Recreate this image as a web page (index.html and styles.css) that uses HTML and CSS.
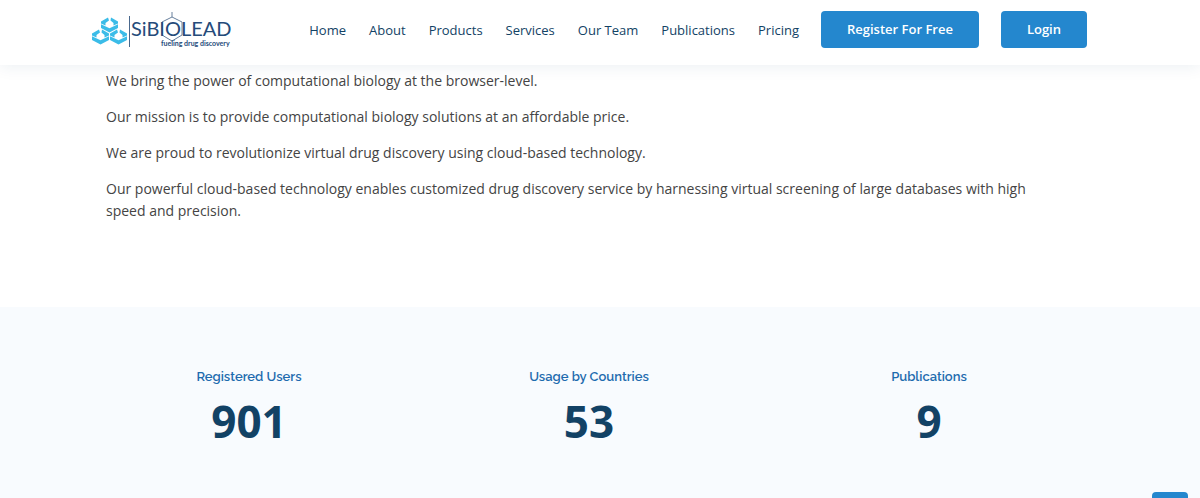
FILE: index.html
```html
<!DOCTYPE html>
<html lang="en">
<head>
  <meta charset="UTF-8">
  <meta name="viewport" content="width=device-width, initial-scale=1.0">
  <title>SiBIOLEAD</title>
  <link rel="stylesheet" href="styles.css">
</head>
<body>
  <header id="header">
    <div class="container header-inner">
      <a href="#" class="logo" aria-label="SiBIOLEAD">
        <svg width="142" height="39" viewBox="0 0 142 39">
          <defs>
            <g id="cube" fill="#3bbce8">
              <path d="M0 4.5 L7 0.5 L8 3.5 L4.5 6 V8.5 L0 6.5 Z" />
              <path d="M10 0.5 L17 4.5 V6.5 L12.5 8.5 V6 L9.5 3.5 Z" />
              <path d="M0 7.2 L8.5 11.2 L17 7.2 V11 L8.5 15.5 L0 11 Z" />
            </g>
          </defs>
          <use href="#cube" x="10" y="7" />
          <use href="#cube" x="1" y="19" />
          <use href="#cube" x="19" y="19" />
          <path d="M38.5 6 V37" stroke="#49688d" stroke-width="1" />
          <path d="M81 2 V7 L91 12 V25 L81 31 L71 25 V12 L81 7" fill="none" stroke="#68809d" stroke-width="1" />
          <text x="40" y="26" class="logo-name">SiBIOLEAD</text>
          <text x="70" y="36" class="logo-tagline">fueling drug discovery</text>
        </svg>
      </a>
      <nav class="navbar">
        <ul>
          <li><a href="#">Home</a></li>
          <li><a href="#">About</a></li>
          <li><a href="#">Products</a></li>
          <li><a href="#">Services</a></li>
          <li><a href="#">Our Team</a></li>
          <li><a href="#">Publications</a></li>
          <li><a href="#">Pricing</a></li>
        </ul>
        <a href="#" class="btn">Register For Free</a>
        <a href="#" class="btn">Login</a>
      </nav>
    </div>
  </header>

  <main>
    <section class="about">
      <div class="container about-text">
        <p>We bring the power of computational biology at the browser-level.</p>
        <p>Our mission is to provide computational biology solutions at an affordable price.</p>
        <p>We are proud to revolutionize virtual drug discovery using cloud-based technology.</p>
        <p>Our powerful cloud-based technology enables customized drug discovery service by harnessing virtual screening of large databases with high speed and precision.</p>
      </div>
    </section>

    <section class="counts">
      <div class="counts-row">
        <div class="count-box">
          <h4>Registered Users</h4>
          <span>901</span>
        </div>
        <div class="count-box">
          <h4>Usage by Countries</h4>
          <span>53</span>
        </div>
        <div class="count-box">
          <h4>Publications</h4>
          <span>9</span>
        </div>
      </div>
    </section>
  </main>

  <a href="#" class="back-to-top" aria-label="Back to top"></a>
</body>
</html>
```
FILE: styles.css
```css
* {
  box-sizing: border-box;
}

body {
  margin: 0;
  font-family: "Open Sans", sans-serif;
  font-size: 14px;
  color: #444444;
  background: #ffffff;
}

a {
  text-decoration: none;
}

.container {
  max-width: 996px;
  margin: 0 auto;
}

/* Header */
#header {
  padding: 10px 22px 16px 0;
  background: #ffffff;
  box-shadow: 0 2px 15px rgba(18, 66, 101, 0.08);
  position: relative;
}

.header-inner {
  display: flex;
  align-items: center;
  justify-content: space-between;
}

.logo svg {
  display: block;
}

.logo-name {
  font-family: Lato, sans-serif;
  font-size: 20px;
  fill: #254b7a;
}

.logo-tagline {
  font-family: Lato, sans-serif;
  font-size: 7px;
  font-weight: 700;
  fill: #254b7a;
}

.navbar,
.navbar ul {
  display: flex;
  align-items: center;
}

.navbar ul {
  gap: 23px;
  margin: 0;
  padding: 0;
  list-style: none;
}

.navbar li {
  line-height: 19px;
}

.navbar li a {
  font-size: 13px;
  color: #124265;
}

.btn {
  margin-left: 22px;
  padding: 9px 26px;
  border-radius: 4px;
  background: #2487ce;
  color: #ffffff;
  font-size: 13px;
  font-weight: 600;
  line-height: 19px;
}

/* About */
.about {
  padding: 5px 22px 85px 0;
}

.about-text {
  padding: 0 30px 0 15px;
}

.about p {
  margin: 0 0 14px;
  line-height: 22px;
}

.about p:last-child {
  margin-bottom: 0;
}

/* Counts */
.counts {
  padding: 60px 22px 60px 0;
  background: #f8fbfe;
}

.counts-row {
  display: grid;
  grid-template-columns: repeat(3, 1fr);
  max-width: 1020px;
  margin: 0 auto;
}

.count-box {
  text-align: center;
}

.count-box h4 {
  margin: 0 0 8px;
  font-family: Raleway, Lato, sans-serif;
  font-size: 13px;
  font-weight: 600;
  line-height: 20px;
  color: #1e6bae;
}

.count-box span {
  display: block;
  font-size: 44px;
  font-weight: 700;
  line-height: 52px;
  color: #124265;
}

.back-to-top {
  position: fixed;
  right: 12px;
  bottom: -30px;
  width: 36px;
  height: 36px;
  border-radius: 4px;
  background: #2487ce;
}
```
